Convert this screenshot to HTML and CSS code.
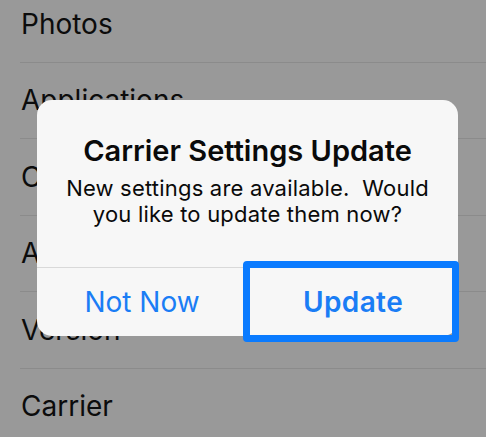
FILE: index.html
```html
<!DOCTYPE html>
<html>
<head>
<meta charset="utf-8">
<link rel="stylesheet" href="styles.css">
</head>
<body>
<div class="screen">
  <ul class="list">
    <li class="row">Photos</li>
    <li class="row">Applications</li>
    <li class="row">Capacity</li>
    <li class="row">Available</li>
    <li class="row">Version</li>
    <li class="row">Carrier</li>
  </ul>
  <div class="alert">
    <div class="alert-body">
      <div class="alert-title">Carrier Settings Update</div>
      <div class="alert-msg">New settings are available.&nbsp; Would<br>you like to update them now?</div>
    </div>
    <div class="alert-actions">
      <div class="action">Not Now</div>
      <div class="action action-primary">Update</div>
    </div>
  </div>
  <div class="focus-ring"></div>
</div>
</body>
</html>
```
FILE: styles.css
```css
html, body {
  margin: 0;
  padding: 0;
}
body {
  width: 486px;
  height: 437px;
  overflow: hidden;
  background: #999999;
  font-family: Inter, "Liberation Sans", sans-serif;
}
.screen {
  position: relative;
  width: 486px;
  height: 437px;
  overflow: hidden;
}
.list {
  list-style: none;
  margin: -14px 0 0 20px;
  padding: 0;
}
.row {
  box-sizing: border-box;
  height: 76.5px;
  border-bottom: 1px solid #8b8b8b;
  display: flex;
  align-items: center;
  padding-left: 1px;
  font-size: 28px;
  color: #0c0c0c;
}
.alert {
  position: absolute;
  left: 37px;
  top: 100px;
  width: 421px;
  height: 236px;
  background: #f7f7f7;
  border-radius: 15px;
  display: flex;
  flex-direction: column;
  overflow: hidden;
}
.alert-body {
  box-sizing: border-box;
  height: 167px;
  padding-top: 33px;
  text-align: center;
  color: #0a0a0a;
}
.alert-title {
  font-size: 29px;
  line-height: 35px;
  font-weight: 600;
}
.alert-msg {
  margin-top: 7px;
  font-size: 22px;
  line-height: 26px;
  letter-spacing: 0.2px;
  white-space: pre;
}
.alert-actions {
  flex: 1;
  display: flex;
  border-top: 1px solid #d9d9d9;
}
.action {
  flex: 1;
  display: flex;
  align-items: center;
  justify-content: center;
  font-size: 28px;
  color: #1a7df5;
}
.action + .action {
  border-left: 1px solid #d9d9d9;
}
.action-primary {
  font-weight: 600;
  letter-spacing: 0.4px;
}
.focus-ring {
  position: absolute;
  left: 243px;
  top: 261px;
  width: 216px;
  height: 81px;
  box-sizing: border-box;
  border: 7px solid #0a7bff;
  border-radius: 4px;
}
```
